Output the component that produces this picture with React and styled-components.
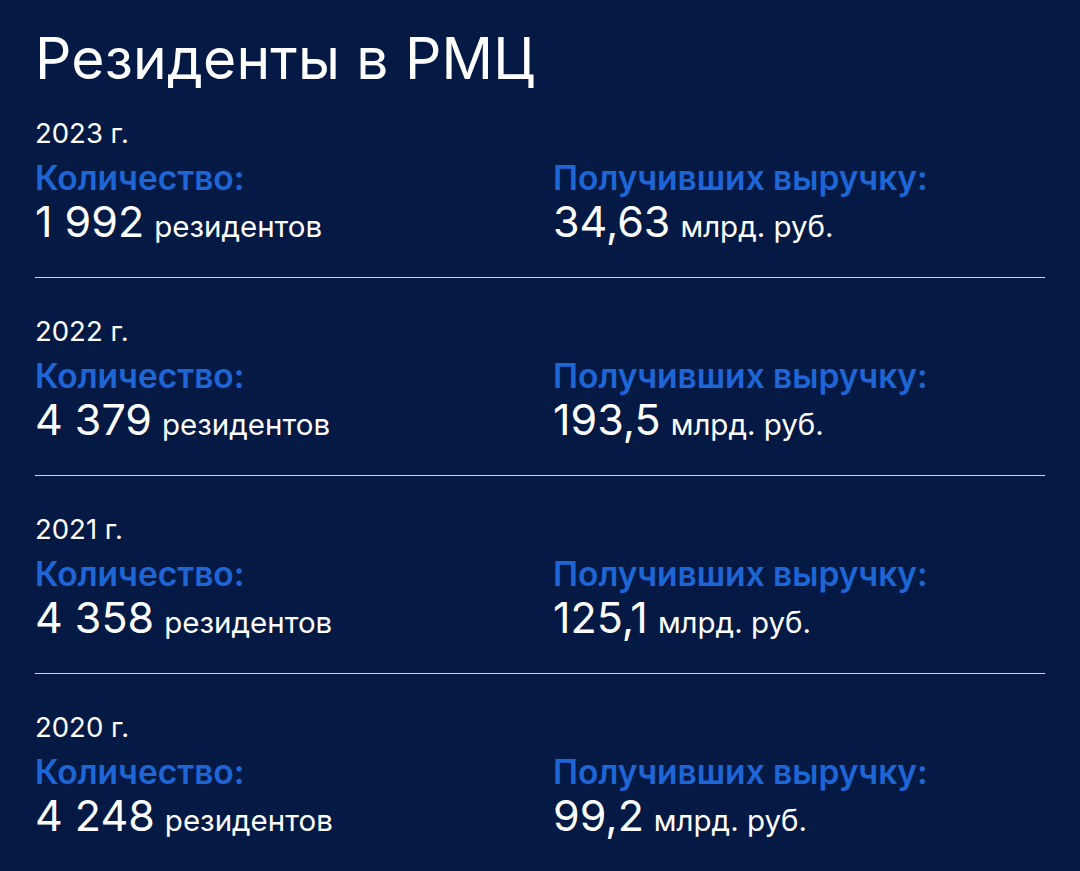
import React from "react";
import styled, { createGlobalStyle } from "styled-components";

const GlobalStyle = createGlobalStyle`
  html, body {
    margin: 0;
    padding: 0;
    background: #041a45;
  }
  body {
    font-family: Inter, "Noto Sans", Arial, sans-serif;
    color: #ffffff;
  }
`;

const Page = styled.div`
  min-height: 871px;
  background: #041a45;
  padding: 25px 35px 0 35px;
  box-sizing: border-box;
`;

const Title = styled.h1`
  margin: 0 0 24px 0;
  font-size: 57px;
  font-weight: 400;
  line-height: 68px;
  letter-spacing: 0.2px;
`;

const List = styled.div`
  width: 1010px;
`;

const Row = styled.section`
  padding: ${(p) => (p.first ? "0" : "37px")} 0 32px 0;
  border-bottom: ${(p) => (p.last ? "none" : "1px solid #cfd4de")};
`;

const Year = styled.div`
  font-size: 27.5px;
  line-height: 32px;
  font-weight: 400;
`;

const Columns = styled.div`
  display: grid;
  grid-template-columns: 518px 1fr;
`;

const Label = styled.div`
  color: #1e66d6;
  font-size: 33.5px;
  font-weight: 600;
  line-height: 40px;
  margin-top: 9px;
`;

const Value = styled.div`
  font-size: 43px;
  line-height: 47px;
  font-weight: 400;
  white-space: nowrap;
`;

const Unit = styled.span`
  font-size: 29.5px;
  line-height: 1;
  font-weight: 400;
  margin-left: 10px;
`;

const data = [
  { year: "2023 г.", count: "1 992", revenue: "34,63" },
  { year: "2022 г.", count: "4 379", revenue: "193,5" },
  { year: "2021 г.", count: "4 358", revenue: "125,1" },
  { year: "2020 г.", count: "4 248", revenue: "99,2" },
];

const App = () => {
  return (
    <Page>
      <GlobalStyle />
      <Title>Резиденты в РМЦ</Title>
      <List>
        {data.map((row, i) => (
          <Row key={row.year} first={i === 0} last={i === data.length - 1}>
            <Year>{row.year}</Year>
            <Columns>
              <div>
                <Label>Количество:</Label>
                <Value>
                  {row.count}
                  <Unit>резидентов</Unit>
                </Value>
              </div>
              <div>
                <Label>Получивших выручку:</Label>
                <Value>
                  {row.revenue}
                  <Unit>млрд. руб.</Unit>
                </Value>
              </div>
            </Columns>
          </Row>
        ))}
      </List>
    </Page>
  );
};

export default App;
